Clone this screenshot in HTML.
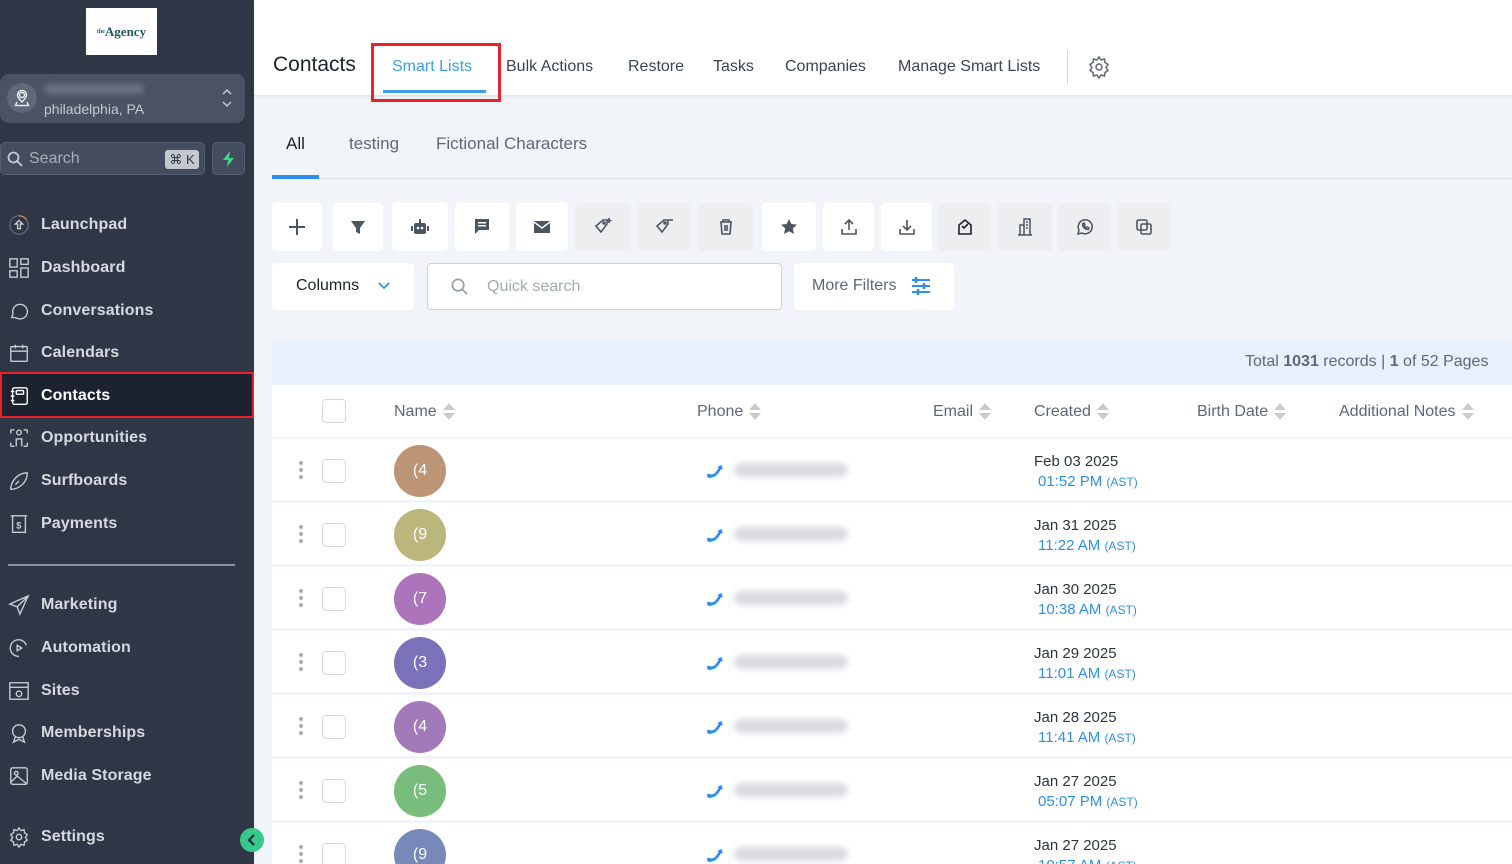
<!DOCTYPE html>
<html><head><meta charset="utf-8"><style>
*{box-sizing:border-box;margin:0;padding:0}
html{width:1512px;height:864px;overflow:hidden}
body{width:1512px;height:864px;overflow:hidden;font-family:"Liberation Sans",Arial,sans-serif;background:#f1f5f9;position:relative}
.a{position:absolute}
#sb{left:0;top:0;width:254px;height:864px;background:#2f3747}
.nav{position:absolute;left:8px;height:30px;display:flex;align-items:center;color:#d5d9df;font-size:16px;font-weight:bold;letter-spacing:0.1px}
.nav svg{width:22px;height:22px;margin-right:11px;stroke:#c7ccd3;fill:none;stroke-width:1.5}
.tab{position:absolute;top:58px;font-size:16px;color:#3c4450}
.btn{position:absolute;top:203px;width:50px;height:48px;border-radius:4px;background:#fff;display:flex;align-items:center;justify-content:center}
.btn.g{background:#eceef0}
.btn svg{width:20px;height:20px;fill:#4d5561}
.row{position:absolute;left:272px;width:1240px;height:61px;background:#fff;overflow:hidden}
.dots{position:absolute;left:27px;top:22px;width:4px}
.dots i{display:block;width:4px;height:4px;border-radius:2px;background:#a7adb5;margin-bottom:3px}
.cb{position:absolute;left:50px;width:24px;height:24px;border:1.5px solid #d5d9df;border-radius:4px;background:#fff}
.av{position:absolute;left:122px;top:6px;width:52px;height:52px;border-radius:26px;color:#fff;font-size:16px;display:flex;align-items:center;justify-content:center}
.ph{position:absolute;left:433px;top:22px}
.blur{position:absolute;left:462px;top:24px;width:114px;height:14px;background:#d8dbe0;border-radius:7px;filter:blur(3px)}
.dt{position:absolute;left:762px;top:13px;font-size:15px;color:#2e343c;line-height:20px}
.dt span{color:#2d8ef0;margin-left:4px}
.dt small{font-size:12px;color:#2d8ef0}
.hd{position:absolute;top:403px;font-size:16px;color:#5f6874;display:flex;align-items:center}
.sort{display:inline-block;margin-left:6px;width:12px;height:18px;position:relative}
.sort:before{content:"";position:absolute;left:0;top:0;border:6px solid transparent;border-bottom:7px solid #c8cbd0;border-top:0}
.sort:after{content:"";position:absolute;left:0;top:10px;border:6px solid transparent;border-top:7px solid #c8cbd0;border-bottom:0}
</style></head><body>
<svg width="0" height="0" style="position:absolute"><symbol id="ph" viewBox="0 0 20 20"><path d="M4 14.5 Q10 17 15 7" fill="none" stroke="#2d8ef0" stroke-width="2.6" stroke-linecap="round"/><path d="M2.5 12.5 l4 1 -1 4 -3.5-1.5z M13 5.5 l3.8-1.5 0.8 4 -3.6 1z" fill="#2d8ef0"/></symbol></svg>
<div id="sb" class="a">
 <div class="a" style="left:86px;top:8px;width:71px;height:47px;background:#fff;display:flex;align-items:center;justify-content:center;font-family:'Liberation Serif',serif;color:#1f5a5a;font-size:13px;font-weight:bold"><sup style="font-size:6px">the</sup>Agency</div>
 <div class="a" style="left:0;top:74px;width:245px;height:49px;background:#4a5364;border-radius:9px">
  <div class="a" style="left:7px;top:9px;width:30px;height:30px;border-radius:15px;background:#5f6878"></div>
  <svg class="a" style="left:14px;top:15px" width="16" height="18" viewBox="0 0 16 18" fill="none" stroke="#e4e7eb" stroke-width="1.5"><circle cx="8" cy="6" r="2.5"/><path d="M8 13 C5 10 3.5 8 3.5 6 a4.5 4.5 0 0 1 9 0 c0 2-1.5 4-4.5 7z M3 13 l-1.5 3.5 h13 l-1.5-3.5"/></svg>
  <div class="a" style="left:44px;top:10px;width:100px;height:10px;background:#6b7382;border-radius:5px;filter:blur(3px)"></div>
  <div class="a" style="left:44px;top:27px;font-size:14px;color:#c3c8cf">philadelphia, PA</div>
  <svg class="a" style="left:221px;top:13px" width="12" height="22" viewBox="0 0 12 22" fill="none" stroke="#c3c8cf" stroke-width="1.5"><path d="M2 7l4-4 4 4M2 15l4 4 4-4"/></svg>
 </div>
 <div class="a" style="left:0;top:142px;width:205px;height:33px;background:#444d5d;border:1px solid #555e6e;border-radius:5px">
  <svg class="a" style="left:6px;top:8px" width="16" height="16" viewBox="0 0 16 16" fill="none" stroke="#c7ccd3" stroke-width="1.8"><circle cx="6.5" cy="6.5" r="5"/><path d="M10 10l5 5"/></svg>
  <div class="a" style="left:28px;top:7px;font-size:16px;color:#a9b0ba">Search</div>
  <div class="a" style="left:164px;top:7px;width:34px;height:19px;background:#c3c8cf;border-radius:3px;font-size:13px;color:#2f3747;text-align:center;line-height:19px">⌘ K</div>
 </div>
 <div class="a" style="left:212px;top:142px;width:33px;height:33px;background:#444d5d;border:1px solid #555e6e;border-radius:5px"><svg class="a" style="left:9px;top:8px" width="14" height="16" viewBox="0 0 14 16"><path d="M8 0L1 9h5l-1 7 7-9H7z" fill="#3dd68c"/></svg></div>
 <div class="nav" style="top:210px"><svg viewBox="0 0 24 24"><circle cx="12" cy="12" r="10" stroke="#5f6878"/><path d="M12 2a10 10 0 0 1 8 4" stroke="#e07b39"/><path d="M12 7l-4 4h2.5v5h3v-5H16z"/></svg>Launchpad</div>
 <div class="nav" style="top:253px"><svg viewBox="0 0 24 24"><rect x="2" y="2" width="8" height="9"/><rect x="14" y="2" width="8" height="6"/><rect x="2" y="15" width="8" height="7"/><rect x="14" y="12" width="8" height="10"/></svg>Dashboard</div>
 <div class="nav" style="top:296px"><svg viewBox="0 0 24 24"><path d="M4 19l1.5-4A8 8 0 1 1 9 19.5z"/></svg>Conversations</div>
 <div class="nav" style="top:338px"><svg viewBox="0 0 24 24"><rect x="3" y="5" width="18" height="16" rx="1"/><path d="M3 10h18M8 3v4M16 3v4"/></svg>Calendars</div>
 <div class="a" style="left:0;top:372px;width:254px;height:46px;background:#1c2230;border:2.5px solid #e8242b"></div>
 <div class="nav" style="top:381px;color:#fff"><svg viewBox="0 0 24 24" style="stroke:#fff"><rect x="5" y="3" width="16" height="18" rx="2"/><rect x="9" y="6" width="8" height="4" rx="1"/><path d="M3 7h4M3 12h4M3 17h4"/></svg>Contacts</div>
 <div class="nav" style="top:423px"><svg viewBox="0 0 24 24"><circle cx="12" cy="6" r="2.5"/><path d="M9 21v-8h6v8M3 3h4M3 3v4M21 3h-4M21 3v4M3 21h4M3 21v-4M21 21h-4M21 21v-4"/></svg>Opportunities</div>
 <div class="nav" style="top:466px"><svg viewBox="0 0 24 24"><path d="M3 21C3 13 10 3 21 3 21 13 13 21 3 21zM8 16l4-4"/></svg>Surfboards</div>
 <div class="nav" style="top:509px"><svg viewBox="0 0 24 24"><path d="M3 3h18M5 3v18h14V3"/><text x="9" y="17" font-size="10" fill="#c7ccd3" stroke="none">$</text></svg>Payments</div>
 <div class="a" style="left:8px;top:564px;width:227px;height:2px;background:#8a919c"></div>
 <div class="nav" style="top:590px"><svg viewBox="0 0 24 24"><path d="M22 2L2 11l8 3 3 8zM10 14l12-12"/></svg>Marketing</div>
 <div class="nav" style="top:633px"><svg viewBox="0 0 24 24"><path d="M20 9A9 9 0 1 0 12 21"/><path d="M10 9l5 3-5 3z"/></svg>Automation</div>
 <div class="nav" style="top:676px"><svg viewBox="0 0 24 24"><rect x="2" y="3" width="20" height="18"/><path d="M2 8h20"/><circle cx="12" cy="15" r="3"/></svg>Sites</div>
 <div class="nav" style="top:718px"><svg viewBox="0 0 24 24"><circle cx="12" cy="10" r="7"/><path d="M8 16l-2 6 6-3 6 3-2-6"/></svg>Memberships</div>
 <div class="nav" style="top:761px"><svg viewBox="0 0 24 24"><rect x="3" y="3" width="18" height="18" rx="2"/><circle cx="9" cy="9" r="2"/><path d="M3 19l7-7 11 9"/></svg>Media Storage</div>
 <div class="nav" style="top:822px"><svg viewBox="0 0 24 24"><circle cx="12" cy="12" r="3"/><path d="M12 2l2 3 3.5-1 .5 3.5 3 2-2 3 2 3-3 2-.5 3.5-3.5-1-2 3-2-3-3.5 1-.5-3.5-3-2 2-3-2-3 3-2 .5-3.5 3.5 1z"/></svg>Settings</div>
</div>
<div class="a" style="left:240px;top:828px;width:24px;height:24px;border-radius:12px;background:#37c98b"><svg class="a" style="left:7px;top:6px" width="10" height="12" viewBox="0 0 10 12" fill="none" stroke="#1c2230" stroke-width="2"><path d="M7 1L2 6l5 5"/></svg></div>

<div class="a" style="left:254px;top:0;width:1258px;height:96px;background:#fff;border-bottom:1px solid #e2e6ea;box-shadow:0 1px 3px rgba(0,0,0,.06)"></div>
<div class="tab" style="left:273px;top:53px;font-size:21px;color:#1d232c">Contacts</div>
<div class="tab" style="left:392px;color:#3aa0e6">Smart Lists</div>
<div class="a" style="left:383px;top:90px;width:103px;height:3px;background:#3aa0e6"></div>
<div class="a" style="left:371px;top:43px;width:130px;height:59px;border:3px solid #e8242b"></div>
<div class="tab" style="left:506px">Bulk Actions</div>
<div class="tab" style="left:628px">Restore</div>
<div class="tab" style="left:713px">Tasks</div>
<div class="tab" style="left:785px">Companies</div>
<div class="tab" style="left:898px">Manage Smart Lists</div>
<div class="a" style="left:1067px;top:50px;width:1px;height:34px;background:#d5d9df"></div>
<svg class="a" style="left:1087px;top:55px" width="24" height="24" viewBox="0 0 24 24" fill="none" stroke="#5f6874" stroke-width="1.5"><circle cx="12" cy="12" r="3"/><path d="M12 2l2 3 3.5-1 .5 3.5 3 2-2 3 2 3-3 2-.5 3.5-3.5-1-2 3-2-3-3.5 1-.5-3.5-3-2 2-3-2-3 3-2 .5-3.5 3.5 1z"/></svg>

<div class="a" style="left:286px;top:134px;font-size:17px;color:#1d232c">All</div>
<div class="a" style="left:349px;top:134px;font-size:17px;color:#5f6874">testing</div>
<div class="a" style="left:436px;top:134px;font-size:17px;color:#5f6874">Fictional Characters</div>
<div class="a" style="left:272px;top:178px;width:1240px;height:1px;background:#dde1e6"></div>
<div class="a" style="left:272px;top:175px;width:47px;height:4px;background:#2d8ef0"></div>

<div class="btn" style="left:272px"><svg viewBox="0 0 20 20"><path d="M9 2h2v7h7v2h-7v7H9v-7H2V9h7z"/></svg></div>
<div class="btn" style="left:333px"><svg viewBox="0 0 20 20"><path d="M3 4h14l-5 7v6l-4-2v-4z"/></svg></div>
<div class="btn" style="left:392px;width:56px"><svg viewBox="0 0 20 20"><rect x="4" y="6" width="12" height="11" rx="2"/><rect x="9" y="2" width="2" height="4"/><rect x="1" y="9" width="2" height="5"/><rect x="17" y="9" width="2" height="5"/><circle cx="8" cy="11" r="1.3" fill="#fff"/><circle cx="12" cy="11" r="1.3" fill="#fff"/></svg></div>
<div class="btn" style="left:455px;width:54px"><svg viewBox="0 0 20 20"><path d="M3 2h14v11H7l-4 4z"/><path d="M6 5h8v1.5H6zM6 8h8v1.5H6z" fill="#fff"/></svg></div>
<div class="btn" style="left:516px;width:52px"><svg viewBox="0 0 20 20"><path d="M2 4h16v12H2z"/><path d="M2 5l8 6 8-6" stroke="#fff" stroke-width="1.5" fill="none"/></svg></div>
<div class="btn g" style="left:575px;width:56px"><svg viewBox="0 0 20 20" style="fill:none;stroke:#4d5561;stroke-width:1.6"><path d="M3 9l7-6h4v4l-6 8z"/><circle cx="11" cy="6" r="1"/><path d="M16 1v5M13.5 3.5h5"/></svg></div>
<div class="btn g" style="left:638px;width:52px"><svg viewBox="0 0 20 20" style="fill:none;stroke:#4d5561;stroke-width:1.6"><path d="M3 9l7-6h4v4l-6 8z"/><circle cx="11" cy="6" r="1"/><path d="M15 3h4"/></svg></div>
<div class="btn g" style="left:699px;width:54px"><svg viewBox="0 0 20 20" style="fill:none;stroke:#4d5561;stroke-width:1.6"><path d="M4 5h12M7 5V3h6v2M5 5l1 12h8l1-12M9 8v6M11 8v6"/></svg></div>
<div class="btn" style="left:762px;width:54px"><svg viewBox="0 0 20 20"><path d="M10 2l2.4 5 5.6.6-4.2 3.8 1.2 5.6L10 14.2 5 17l1.2-5.6L2 7.6 7.6 7z"/></svg></div>
<div class="btn" style="left:823px;width:51px"><svg viewBox="0 0 20 20" style="fill:none;stroke:#4d5561;stroke-width:1.6"><path d="M10 13V3M6 7l4-4 4 4M3 12v5h14v-5"/></svg></div>
<div class="btn" style="left:881px;width:51px"><svg viewBox="0 0 20 20" style="fill:none;stroke:#4d5561;stroke-width:1.6"><path d="M10 3v10M6 9l4 4 4-4M3 12v5h14v-5"/></svg></div>
<div class="btn g" style="left:939px;width:52px"><svg viewBox="0 0 20 20" style="fill:none;stroke:#1d232c;stroke-width:1.6"><path d="M4 8l6-5 6 5v9H4z"/><path d="M7 9l2 2 4-4"/></svg></div>
<div class="btn g" style="left:998px;width:54px"><svg viewBox="0 0 20 20" style="fill:none;stroke:#4d5561;stroke-width:1.5"><path d="M3 18h14M5 18V8h4M9 18V2h6v16M11 5h2M11 8h2M11 11h2"/></svg></div>
<div class="btn g" style="left:1059px;width:52px"><svg viewBox="0 0 20 20" style="fill:none;stroke:#4d5561;stroke-width:1.5"><path d="M3 17l1-4a7 7 0 1 1 3 3z"/><path d="M7.5 7c0 3 2.5 5.5 5.5 5.5l1-1.5-2-1-1 1-2-2 1-1-1-2z"/></svg></div>
<div class="btn g" style="left:1118px;width:52px"><svg viewBox="0 0 20 20" style="fill:none;stroke:#4d5561;stroke-width:1.6"><rect x="3" y="3" width="10" height="10" rx="1.5"/><rect x="7" y="7" width="10" height="10" rx="1.5"/></svg></div>

<div class="a" style="left:272px;top:263px;width:142px;height:47px;background:#fff;border-radius:4px;font-size:16px;color:#1d232c;padding:14px 0 0 24px">Columns</div>
<svg class="a" style="left:378px;top:282px" width="12" height="8" viewBox="0 0 12 8" fill="none" stroke="#2d8ef0" stroke-width="1.6"><path d="M1 1l5 5 5-5"/></svg>
<div class="a" style="left:427px;top:263px;width:355px;height:47px;background:#fff;border:1px solid #cdd2d8;border-radius:4px">
 <svg class="a" style="left:22px;top:13px" width="19" height="19" viewBox="0 0 20 20" fill="none" stroke="#9aa1ab" stroke-width="1.8"><circle cx="8.5" cy="8.5" r="6"/><path d="M13 13l5 5"/></svg>
 <div class="a" style="left:59px;top:14px;font-size:16px;color:#a3aab3">Quick search</div></div>
<div class="a" style="left:794px;top:263px;width:160px;height:47px;background:#fff;border-radius:4px;font-size:16px;color:#5f6874;padding:14px 0 0 18px">More Filters</div>
<svg class="a" style="left:911px;top:277px" width="20" height="18" viewBox="0 0 20 18" stroke="#2d8ef0" stroke-width="2"><path d="M1 3h18M1 9h18M1 15h18"/><path d="M5 0v6M13 6v6M7 12v6" stroke-width="2.5"/></svg>

<div class="a" style="left:272px;top:341px;width:1240px;height:44px;background:#e6f1fb;border-radius:6px 6px 0 0"></div>
<div class="a" style="left:1245px;top:353px;font-size:16px;color:#5f6874">Total <b>1031</b> records | <b>1</b> of 52 Pages</div>
<div class="a" style="left:272px;top:385px;width:1240px;height:52px;background:#fff"></div>
<div class="cb" style="left:322px;top:399px"></div>
<div class="hd" style="left:394px">Name<span class="sort"></span></div>
<div class="hd" style="left:697px">Phone<span class="sort"></span></div>
<div class="hd" style="left:933px">Email<span class="sort"></span></div>
<div class="hd" style="left:1034px">Created<span class="sort"></span></div>
<div class="hd" style="left:1197px">Birth Date<span class="sort"></span></div>
<div class="hd" style="left:1339px">Additional Notes<span class="sort"></span></div>

<div class="row" style="top:439px"><div class="dots"><i></i><i></i><i></i></div><div class="cb" style="top:20px"></div><div class="av" style="background:#bc9476">(4</div><svg class="ph" width="20" height="20"><use href="#ph"/></svg><div class="blur"></div><div class="dt">Feb 03 2025<br><span>01:52 PM</span> <small>(AST)</small></div></div>
<div class="row" style="top:503px"><div class="dots"><i></i><i></i><i></i></div><div class="cb" style="top:20px"></div><div class="av" style="background:#bab67c">(9</div><svg class="ph" width="20" height="20"><use href="#ph"/></svg><div class="blur"></div><div class="dt">Jan 31 2025<br><span>11:22 AM</span> <small>(AST)</small></div></div>
<div class="row" style="top:567px"><div class="dots"><i></i><i></i><i></i></div><div class="cb" style="top:20px"></div><div class="av" style="background:#ab74bb">(7</div><svg class="ph" width="20" height="20"><use href="#ph"/></svg><div class="blur"></div><div class="dt">Jan 30 2025<br><span>10:38 AM</span> <small>(AST)</small></div></div>
<div class="row" style="top:631px"><div class="dots"><i></i><i></i><i></i></div><div class="cb" style="top:20px"></div><div class="av" style="background:#7b73b9">(3</div><svg class="ph" width="20" height="20"><use href="#ph"/></svg><div class="blur"></div><div class="dt">Jan 29 2025<br><span>11:01 AM</span> <small>(AST)</small></div></div>
<div class="row" style="top:695px"><div class="dots"><i></i><i></i><i></i></div><div class="cb" style="top:20px"></div><div class="av" style="background:#a27aba">(4</div><svg class="ph" width="20" height="20"><use href="#ph"/></svg><div class="blur"></div><div class="dt">Jan 28 2025<br><span>11:41 AM</span> <small>(AST)</small></div></div>
<div class="row" style="top:759px"><div class="dots"><i></i><i></i><i></i></div><div class="cb" style="top:20px"></div><div class="av" style="background:#78bd7c">(5</div><svg class="ph" width="20" height="20"><use href="#ph"/></svg><div class="blur"></div><div class="dt">Jan 27 2025<br><span>05:07 PM</span> <small>(AST)</small></div></div>
<div class="row" style="top:823px;height:41px"><div class="dots"><i></i><i></i><i></i></div><div class="cb" style="top:20px"></div><div class="av" style="background:#7689b8">(9</div><svg class="ph" width="20" height="20"><use href="#ph"/></svg><div class="blur"></div><div class="dt">Jan 27 2025<br><span>10:57 AM</span> <small>(AST)</small></div></div>
</body></html>
